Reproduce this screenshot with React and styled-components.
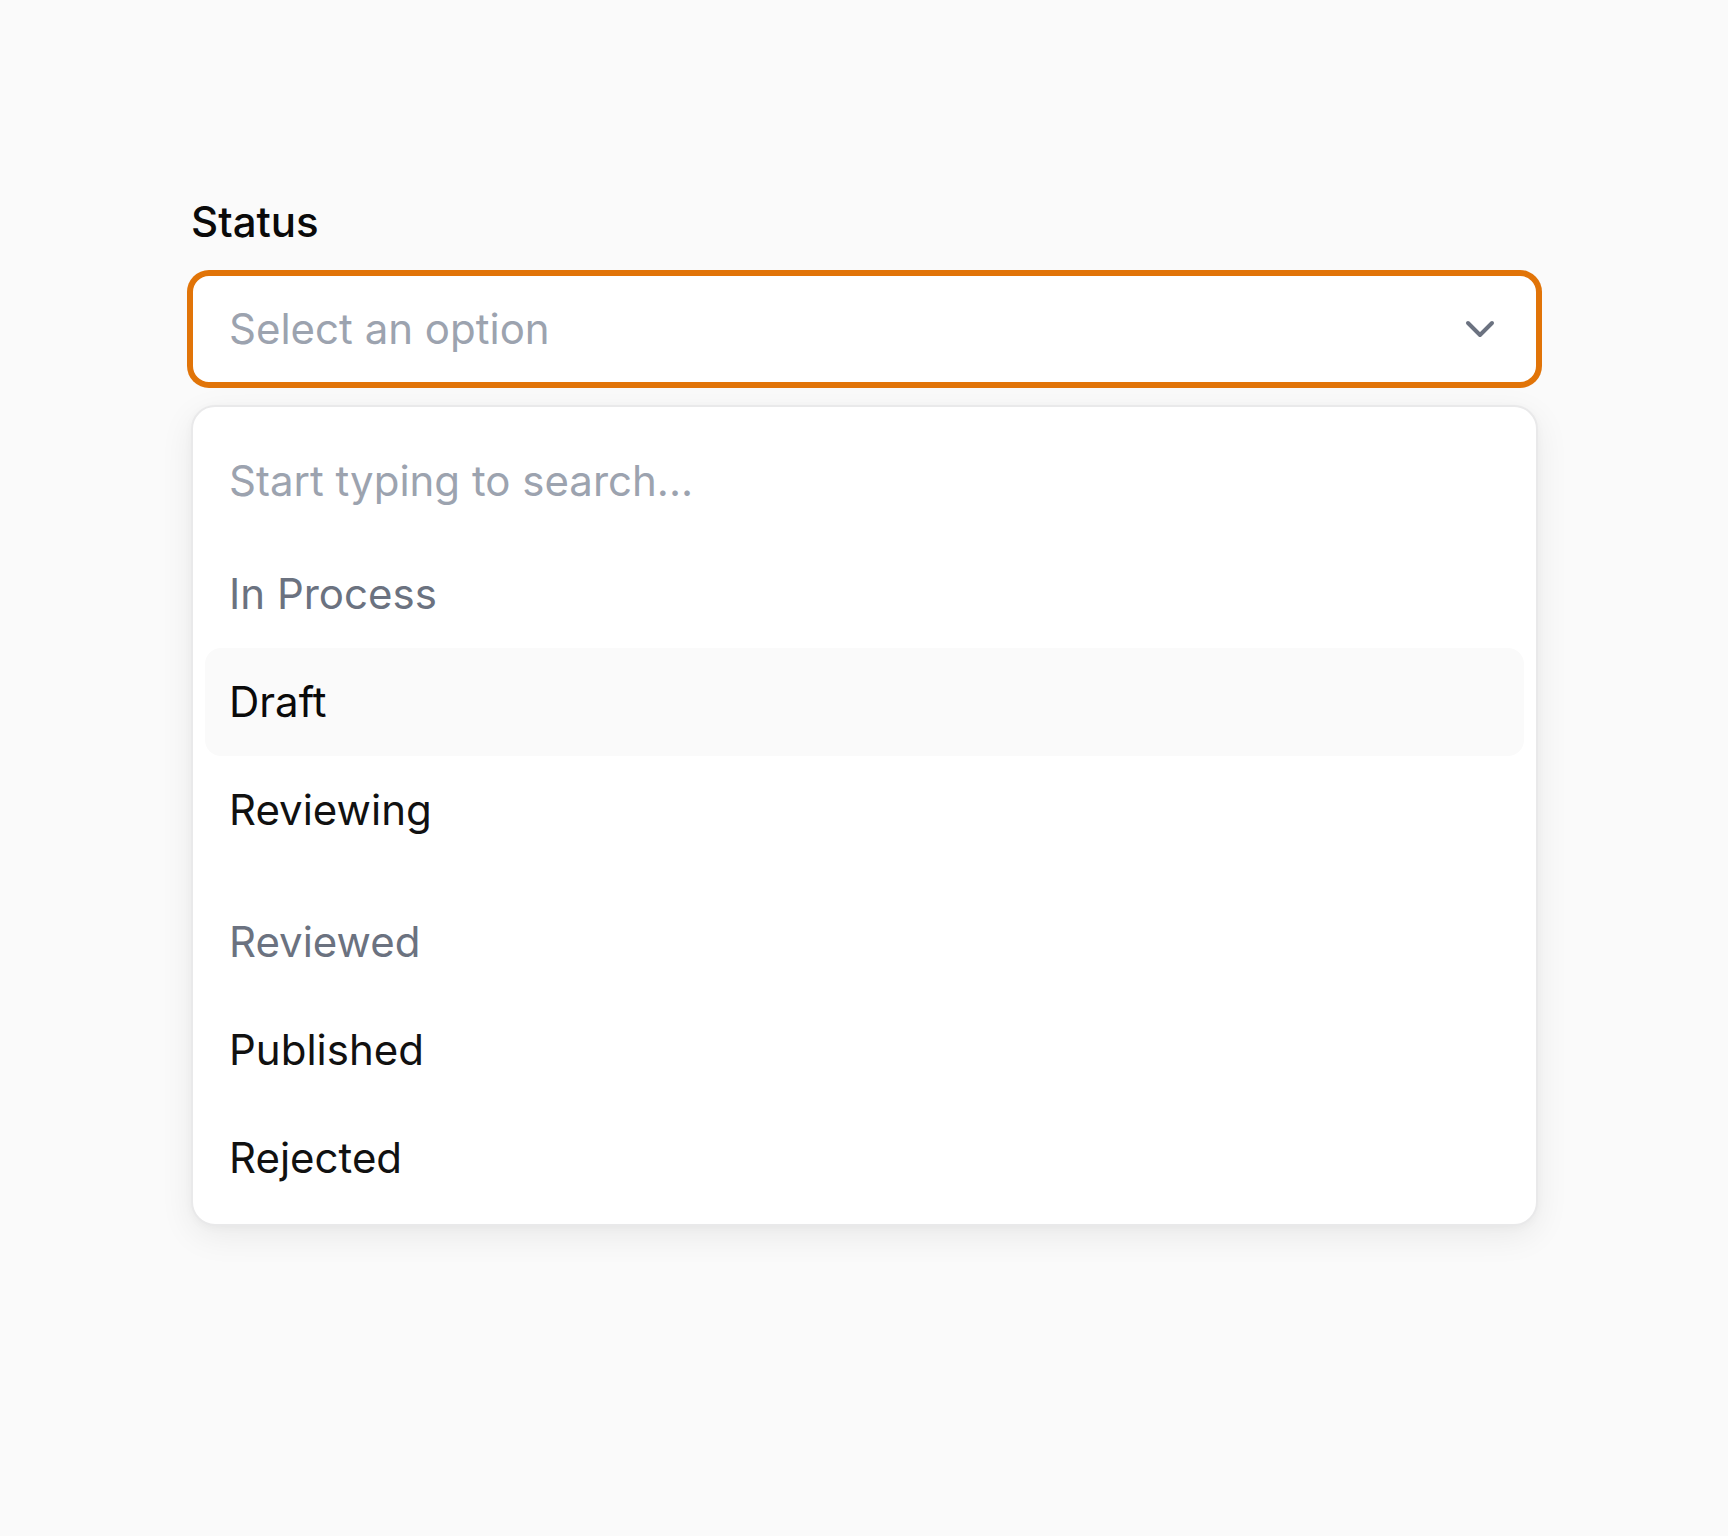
import React from 'react';
import styled, { createGlobalStyle } from 'styled-components';
import { ChevronDown } from 'lucide-react';

const GlobalStyle = createGlobalStyle`
  html, body {
    margin: 0;
    padding: 0;
    background: #fafafa;
  }
  body {
    font-family: Inter, "Noto Sans", sans-serif;
    -webkit-font-smoothing: antialiased;
  }
  * {
    box-sizing: border-box;
  }
`;

const orange = '#e17408';

const Page = styled.div`
  min-height: 1536px;
  padding: 192px 190px 0 191px;
`;

const Field = styled.div`
  display: flex;
  flex-direction: column;
`;

const Label = styled.label`
  font-size: 42px;
  line-height: 60px;
  font-weight: 500;
  color: #0a0a0a;
  margin-bottom: 22px;
`;

const Trigger = styled.button`
  display: flex;
  align-items: center;
  justify-content: space-between;
  width: 100%;
  height: 110px;
  padding: 0 32px 0 36px;
  background: #fff;
  border: 2px solid ${orange};
  border-radius: 18px;
  box-shadow: 0 0 0 4px ${orange};
  font: inherit;
  cursor: pointer;
  text-align: left;
`;

const Placeholder = styled.span`
  font-size: 42px;
  line-height: 60px;
  color: #9ca3af;
`;

const Chevron = styled(ChevronDown)`
  color: #6b7280;
  flex-shrink: 0;
`;

const Listbox = styled.div`
  margin-top: 21px;
  background: #fff;
  border: 2px solid #e9e9ea;
  border-radius: 24px;
  padding: 12px;
  box-shadow: 0 10px 34px rgba(0, 0, 0, 0.07), 0 2px 8px rgba(0, 0, 0, 0.03);
  display: flex;
  flex-direction: column;
`;

const SearchInput = styled.input`
  border: none;
  outline: none;
  background: transparent;
  font: inherit;
  font-size: 42px;
  line-height: 60px;
  height: 121px;
  padding: 31px 24px 30px;
  color: #111827;

  &::placeholder {
    color: #9ca3af;
  }
`;

const Group = styled.div`
  display: flex;
  flex-direction: column;

  & + & {
    margin-top: 24px;
  }
`;

const GroupLabel = styled.div`
  font-size: 42px;
  line-height: 60px;
  padding: 24px;
  color: #6b7280;
`;

const Option = styled.div`
  font-size: 42px;
  line-height: 60px;
  padding: 24px;
  border-radius: 16px;
  color: ${props => (props.$active ? '#0a0a0a' : '#111111')};
  background: ${props => (props.$active ? '#fafafa' : 'transparent')};
  cursor: pointer;
`;

const groups = [
  { label: 'In Process', options: ['Draft', 'Reviewing'] },
  { label: 'Reviewed', options: ['Published', 'Rejected'] }
];

const App = () => {
  const active = 'Draft';

  return (
    <>
      <GlobalStyle />
      <Page>
        <Field>
          <Label>Status</Label>
          <Trigger type="button">
            <Placeholder>Select an option</Placeholder>
            <Chevron size={48} strokeWidth={2} />
          </Trigger>
          <Listbox role="listbox">
            <SearchInput placeholder="Start typing to search..." />
            {groups.map(group => (
              <Group key={group.label}>
                <GroupLabel>{group.label}</GroupLabel>
                {group.options.map(option => (
                  <Option key={option} $active={option === active}>
                    {option}
                  </Option>
                ))}
              </Group>
            ))}
          </Listbox>
        </Field>
      </Page>
    </>
  );
};

export default App;
